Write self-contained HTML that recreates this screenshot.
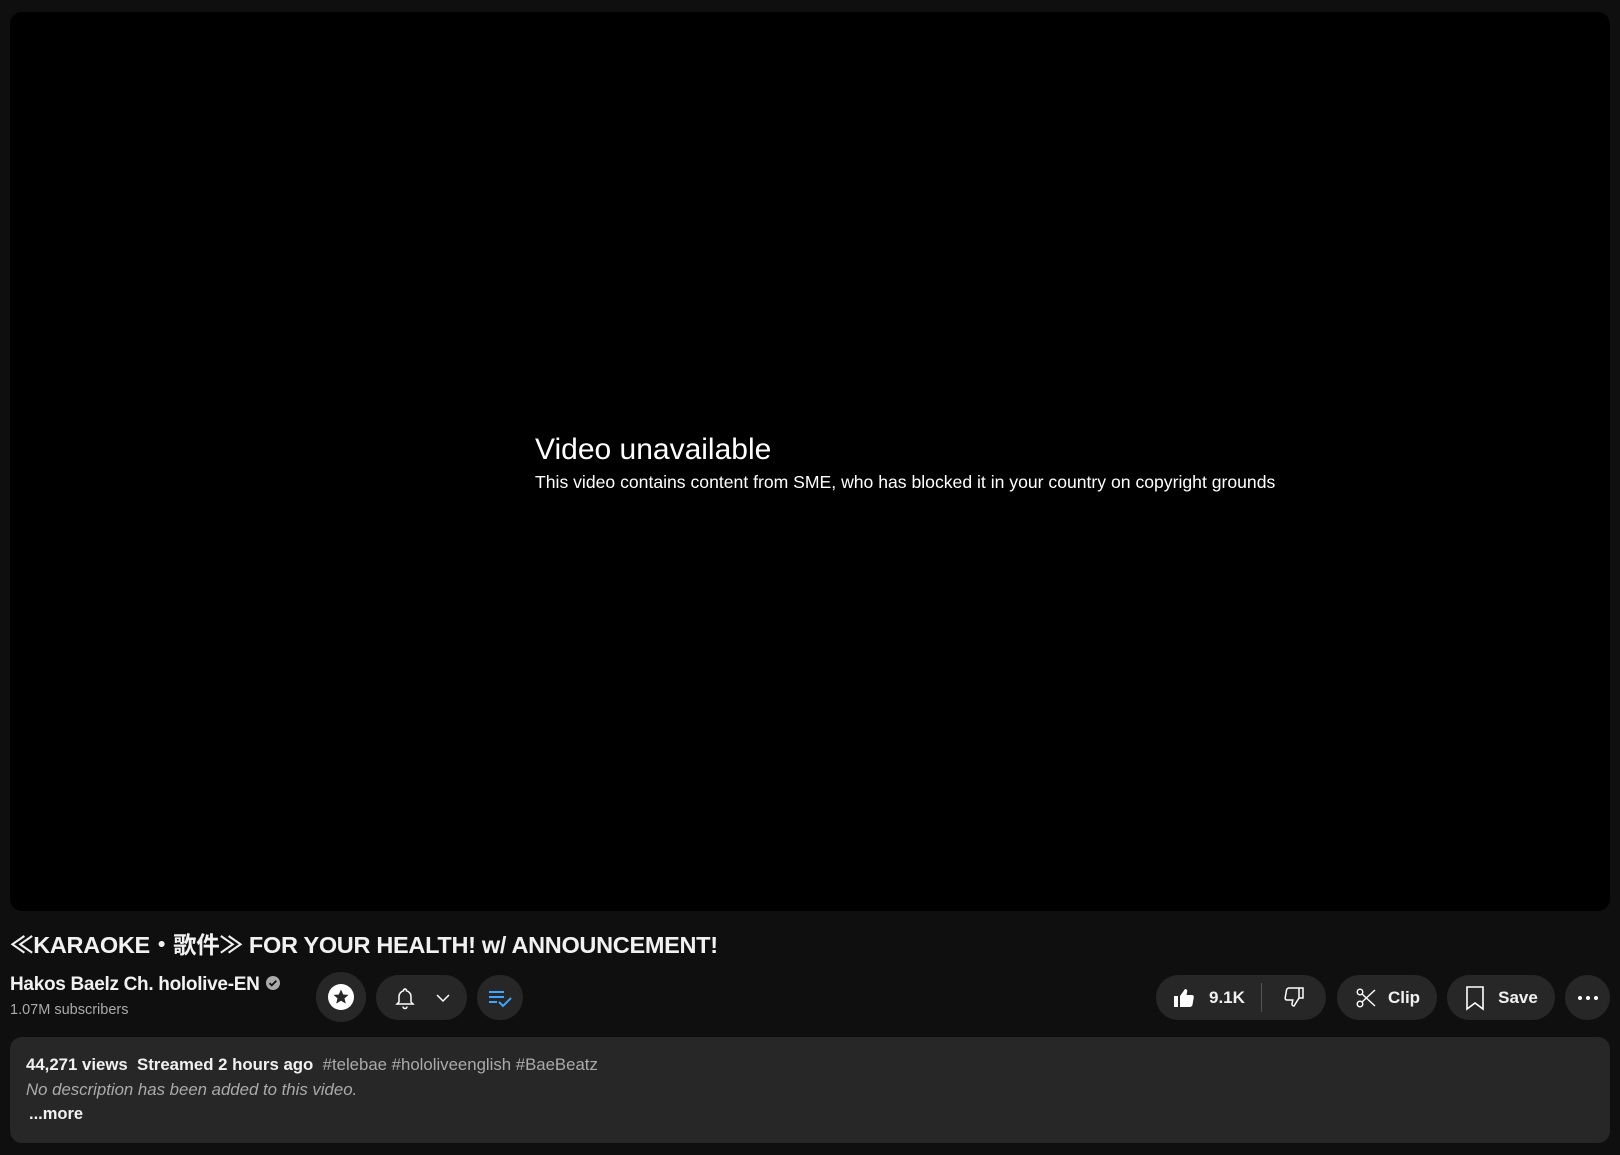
<!DOCTYPE html>
<html><head><meta charset="utf-8"><style>
*{margin:0;padding:0;box-sizing:border-box}
body{width:1620px;height:1155px;background:#0f0f0f;font-family:"Liberation Sans","Noto Sans CJK JP",sans-serif;color:#f1f1f1;position:relative;overflow:hidden}
.abs{position:absolute}
.video{left:10px;top:12px;width:1600px;height:899px;background:#000;border-radius:12px}
.vt{left:535px;top:433px;font-size:30px;color:#fff;white-space:nowrap}
.vs{left:535px;top:472px;font-size:17.6px;color:#fff;white-space:nowrap}
.title{left:10px;top:926px;font-size:23.5px;font-weight:bold;white-space:nowrap;letter-spacing:-0.3px}
.chan{left:10px;top:974px;font-size:19px;font-weight:bold;white-space:nowrap;letter-spacing:-0.3px}
.subs{left:10px;top:1002px;font-size:14.5px;color:#aaa}
.btn{background:#272727;border-radius:24px;display:flex;align-items:center;justify-content:center;font-size:17px;font-weight:bold;color:#f1f1f1}
.desc{left:10px;top:1037px;width:1600px;height:106px;background:#272727;border-radius:12px}
.l1{left:26px;top:1055px;font-size:16.8px;white-space:nowrap;font-weight:bold}
.l2{left:26px;top:1080px;font-size:16.8px;font-style:italic;color:#aaa}
.l3{left:29px;top:1105px;font-size:16.5px;font-weight:bold}
</style></head><body>
<div class="abs video"></div>
<div class="abs vt">Video unavailable</div>
<div class="abs vs">This video contains content from SME, who has blocked it in your country on copyright grounds</div>
<div class="abs title">≪KARAOKE・歌件≫ FOR YOUR HEALTH! w/ ANNOUNCEMENT!</div>
<div class="abs chan">Hakos Baelz Ch. hololive-EN <svg width="16" height="16" viewBox="0 0 16 16" style="vertical-align:-1px"><circle cx="8" cy="8" r="7" fill="#aaa"/><path d="M4.5 8.2l2.3 2.2 4.5-4.6" stroke="#0f0f0f" stroke-width="1.8" fill="none"/></svg></div>
<div class="abs subs">1.07M subscribers</div>

<div class="abs btn" style="left:316px;top:972px;width:50px;height:50px;border-radius:25px"><svg width="28" height="28" viewBox="0 0 28 28"><circle cx="14" cy="14" r="13" fill="#fff"/><path d="M14 6.5l2.2 5 5.3.4-4 3.5 1.3 5.2L14 17.8l-4.8 2.8 1.3-5.2-4-3.5 5.3-.4z" fill="#272727"/></svg></div>
<div class="abs btn" style="left:376px;top:975px;width:91px;height:45px;gap:18px"><svg width="24" height="24" viewBox="0 0 24 24" fill="none" stroke="#fff" stroke-width="1.5"><path d="M12 3a1.5 1.5 0 0 1 1.5 1.5v.3A6 6 0 0 1 18 10.5v5.5l2 2H4l2-2v-5.5a6 6 0 0 1 4.5-5.7v-.3A1.5 1.5 0 0 1 12 3z"/><path d="M10 20.5a2 2 0 0 0 4 0"/></svg><svg width="16" height="16" viewBox="0 0 16 16" fill="none" stroke="#fff" stroke-width="1.5"><path d="M2 5l6 6 6-6"/></svg></div>
<div class="abs btn" style="left:477px;top:975px;width:46px;height:45px"><svg width="26" height="24" viewBox="0 0 26 24" fill="none" stroke="#3ea6ff" stroke-width="2"><path d="M2 6h15M2 11h15M2 16h8M12 16l4 4 8-8"/></svg></div>

<div class="abs btn" style="left:1156px;top:975px;width:170px;height:45px;justify-content:flex-start;padding-left:15px"><svg width="26" height="24" viewBox="0 0 24 24" fill="#fff"><path d="M2 10h4v11H2zM8 21V10l5-7c1.5 0 2.5 1 2.2 2.5L14.5 9H20c1.2 0 2 1 1.8 2.2l-1.3 7.6c-.2 1.2-1.2 2.2-2.4 2.2z"/></svg><span style="margin-left:12px">9.1K</span><div style="position:absolute;left:105px;top:8px;width:1px;height:29px;background:#555"></div><svg style="position:absolute;left:125px;top:10px" width="26" height="24" viewBox="0 0 24 24" fill="none" stroke="#fff" stroke-width="1.5"><path d="M17 3h4v10h-4zM17 13l-5 8c-1.3 0-2.3-1-2-2.3l.8-3.7H5c-1.2 0-2-1-1.8-2.2l1.3-7.6C4.7 4 5.7 3 7 3h10z"/></svg></div>
<div class="abs btn" style="left:1337px;top:975px;width:100px;height:45px;gap:10px"><svg width="24" height="24" viewBox="0 0 24 24" fill="none" stroke="#fff" stroke-width="1.4"><circle cx="6" cy="6" r="2.8"/><circle cx="6" cy="18" r="2.8"/><path d="M8 8l13 12M8 16L21 4M12 12"/></svg><span>Clip</span></div>
<div class="abs btn" style="left:1447px;top:975px;width:108px;height:45px;gap:12px"><svg width="22" height="26" viewBox="0 0 22 26" fill="none" stroke="#fff" stroke-width="1.6"><path d="M3 2h16v22l-8-6-8 6z"/></svg><span>Save</span></div>
<div class="abs btn" style="left:1565px;top:975px;width:45px;height:45px;border-radius:23px"><svg width="22" height="6" viewBox="0 0 22 6" fill="#fff"><circle cx="3" cy="3" r="2"/><circle cx="11" cy="3" r="2"/><circle cx="19" cy="3" r="2"/></svg></div>

<div class="abs desc"></div>
<div class="abs l1">44,271 views&nbsp; Streamed 2 hours ago&nbsp; <span style="color:#aaa;font-weight:normal">#telebae #hololiveenglish #BaeBeatz</span></div>
<div class="abs l2">No description has been added to this video.</div>
<div class="abs l3">...more</div>
</body></html>
